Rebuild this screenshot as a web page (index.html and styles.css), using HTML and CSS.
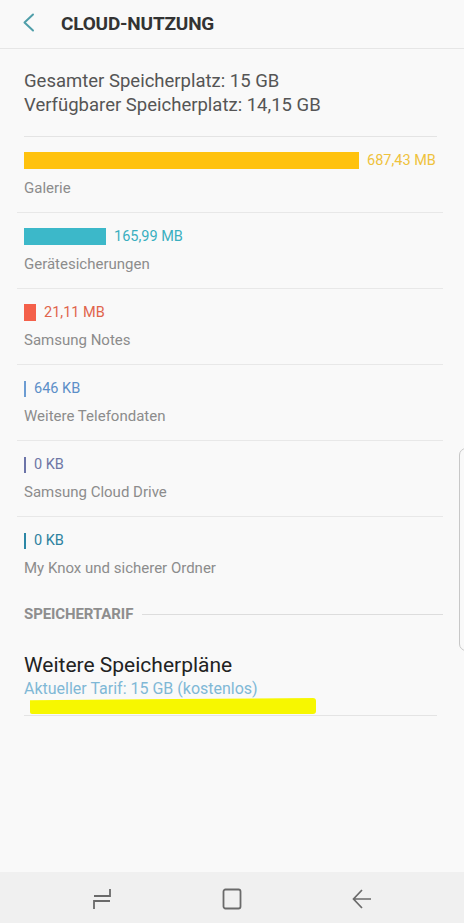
FILE: index.html
```html
<!DOCTYPE html>
<html lang="de">
<head>
<meta charset="utf-8">
<title>Cloud-Nutzung</title>
<link rel="stylesheet" href="styles.css">
</head>
<body>
<div class="screen">
  <header class="appbar">
    <svg class="back" width="14" height="20" viewBox="0 0 14 20"><path d="M11 1.5 L2.5 9.5 L11 17.5" fill="none" stroke="#4f9ea9" stroke-width="2" stroke-linecap="round" stroke-linejoin="round"/></svg>
    <h1 class="title">CLOUD-NUTZUNG</h1>
  </header>

  <section class="summary">
    <p>Gesamter Speicherplatz: 15 GB</p>
    <p>Verfügbarer Speicherplatz: 14,15 GB</p>
  </section>

  <ul class="usage">
    <li class="row">
      <div class="meter"><span class="bar c-gallery" style="width:335px"></span><span class="value t-gallery">687,43 MB</span></div>
      <div class="label">Galerie</div>
    </li>
    <li class="row">
      <div class="meter"><span class="bar c-backup" style="width:82px"></span><span class="value t-backup">165,99 MB</span></div>
      <div class="label">Gerätesicherungen</div>
    </li>
    <li class="row">
      <div class="meter"><span class="bar c-notes" style="width:12px"></span><span class="value t-notes">21,11 MB</span></div>
      <div class="label">Samsung Notes</div>
    </li>
    <li class="row">
      <div class="meter"><span class="bar thin c-phone"></span><span class="value t-phone">646 KB</span></div>
      <div class="label">Weitere Telefondaten</div>
    </li>
    <li class="row">
      <div class="meter"><span class="bar thin c-drive"></span><span class="value t-drive">0 KB</span></div>
      <div class="label">Samsung Cloud Drive</div>
    </li>
    <li class="row">
      <div class="meter"><span class="bar thin c-knox"></span><span class="value t-knox">0 KB</span></div>
      <div class="label">My Knox und sicherer Ordner</div>
    </li>
  </ul>

  <div class="section-head">
    <span class="section-title">SPEICHERTARIF</span>
    <span class="rule"></span>
  </div>

  <div class="plan">
    <div class="plan-title">Weitere Speicherpläne</div>
    <div class="plan-sub">Aktueller Tarif: 15 GB (kostenlos)</div>
    <span class="marker"></span>
  </div>

  <div class="edge-handle"></div>

  <nav class="navbar">
    <svg class="nav-icon" width="20" height="22" viewBox="0 0 20 22"><path d="M18 1 V8 H2 M2 21 V13 H18" fill="none" stroke="#6a6a6a" stroke-width="1.8"/></svg>
    <svg class="nav-icon" width="20" height="22" viewBox="0 0 20 22"><rect x="1.5" y="1.5" width="17" height="19" rx="2" fill="none" stroke="#6a6a6a" stroke-width="1.8"/></svg>
    <svg class="nav-icon" width="20" height="22" viewBox="0 0 20 22"><path d="M19 11 H2 M10 2 L1.5 11 L10 20" fill="none" stroke="#6a6a6a" stroke-width="1.7"/></svg>
  </nav>
</div>
</body>
</html>
```

FILE: styles.css
```css
* { box-sizing: border-box; }

html, body {
  margin: 0;
  padding: 0;
  background: #f9f9f9;
}

body {
  font-family: Roboto, "Noto Sans", "Liberation Sans", sans-serif;
}

.screen {
  position: relative;
  width: 464px;
  height: 923px;
  display: flex;
  flex-direction: column;
  background: #f9f9f9;
  overflow: hidden;
}

.appbar {
  height: 49px;
  display: flex;
  align-items: center;
  padding-left: 22px;
  gap: 25px;
  border-bottom: 1px solid #e6e6e6;
  flex-shrink: 0;
}

.back { display: block; margin-top: -2px; }

.title {
  margin: 0;
  font-size: 19px;
  font-weight: 700;
  letter-spacing: -0.2px;
  color: #333333;
  margin-top: -2px;
}

.summary {
  margin: 0 27px 0 24px;
  padding: 20px 0 19px;
  border-bottom: 1px solid #e4e4e4;
}

.summary p {
  margin: 0;
  font-size: 18.5px;
  line-height: 24px;
  color: #555555;
}

.usage {
  list-style: none;
  margin: 0 21px 0 17px;
  padding: 0;
}

.row {
  padding: 15px 7px 14px;
  border-bottom: 1px solid #e8e8e8;
}

.row:last-child { border-bottom: none; }

.meter {
  height: 17px;
  display: flex;
  align-items: center;
  gap: 8px;
}

.bar {
  display: block;
  height: 17px;
  flex-shrink: 0;
}

.bar.thin {
  width: 2px;
  height: 16px;
}

.value {
  font-size: 14.5px;
  line-height: 17px;
}

.label {
  margin-top: 9px;
  font-size: 15px;
  line-height: 20px;
  color: #8c8c8c;
}

.c-gallery { background: #ffc20e; }
.t-gallery { color: #efc23c; }
.c-backup { background: #3cb8c9; }
.t-backup { color: #3aafc0; }
.c-notes { background: #f4604a; }
.t-notes { color: #e0644c; }
.c-phone { background: #6c9cd2; }
.t-phone { color: #5c8fc8; }
.c-drive { background: #6c74a8; }
.t-drive { color: #6e77a6; }
.c-knox { background: #2c87a6; }
.t-knox { color: #2e82a0; }

.section-head {
  margin: 12px 21px 0 24px;
  height: 20px;
  display: flex;
  align-items: center;
  gap: 9px;
}

.section-title {
  font-size: 15px;
  font-weight: 700;
  line-height: 20px;
  color: #8e8e8e;
  letter-spacing: -0.1px;
}

.rule {
  flex: 1;
  height: 1px;
  background: #dddddd;
}

.plan {
  position: relative;
  margin: 0 27px 0 24px;
  padding: 28px 0 15px;
  border-bottom: 1px solid #e4e4e4;
}

.plan-title {
  font-size: 21px;
  line-height: 26px;
  color: #222222;
}

.plan-sub {
  font-size: 16px;
  line-height: 22px;
  color: #7fb8d6;
}

.marker {
  position: absolute;
  left: 6px;
  top: 74px;
  width: 286px;
  height: 16px;
  background: #f7f700;
  border-radius: 1px 3px 3px 2px;
  clip-path: polygon(0 14%, 50% 6%, 100% 0, 100% 100%, 0 100%);
}

.edge-handle {
  position: absolute;
  left: 459px;
  top: 448px;
  width: 14px;
  height: 203px;
  border: 1px solid #c8c8c8;
  border-radius: 7px;
}

.navbar {
  margin-top: auto;
  height: 51px;
  background: #f0f0f0;
  display: flex;
  align-items: center;
  padding-left: 92px;
  padding-top: 3px;
  gap: 110px;
  flex-shrink: 0;
}

.nav-icon { display: block; }
```
